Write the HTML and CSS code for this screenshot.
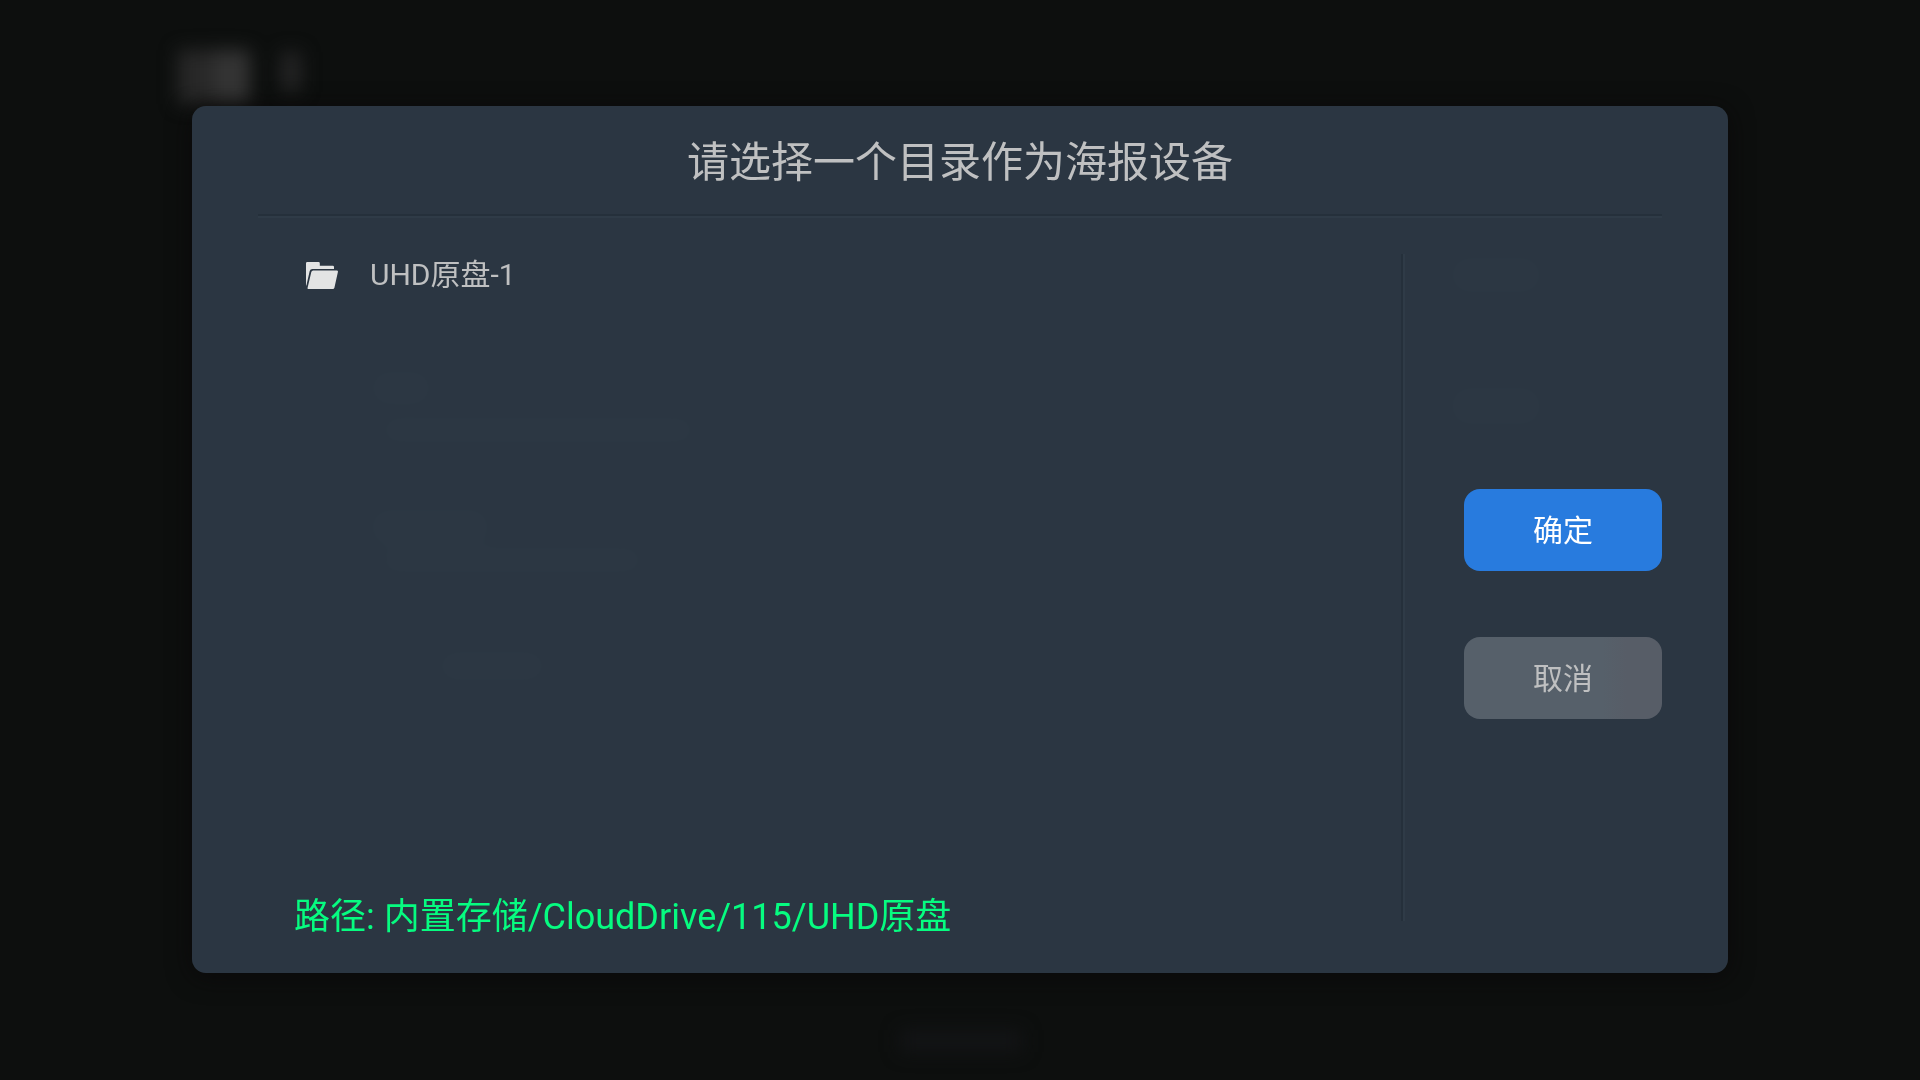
FILE: index.html
```html
<!DOCTYPE html>
<html lang="zh-CN">
<head>
<meta charset="utf-8">
<meta name="viewport" content="width=device-width, initial-scale=1">
<title>请选择一个目录作为海报设备</title>
<link rel="stylesheet" href="styles.css">
</head>
<body class="page">
<!-- Dimmed, out-of-focus screen behind the dialog -->
<svg class="backdrop" viewBox="0 0 1920 1080" preserveAspectRatio="none" aria-hidden="true">
  <defs>
    <filter id="soft" x="-50%" y="-50%" width="200%" height="200%" color-interpolation-filters="sRGB"><feGaussianBlur stdDeviation="9"/></filter>
  </defs>
  <g filter="url(#soft)">
    <rect x="178" y="50" width="40" height="54" fill="#282828"/>
    <rect x="214" y="50" width="36" height="54" fill="#343434"/>
    <rect x="281" y="52" width="20" height="40" fill="#242425"/>
    <rect x="900" y="1030" width="122" height="22" fill="#131416"/>
    <rect x="376" y="376" width="50" height="24" fill="#3a3a3a"/>
    <rect x="386" y="422" width="304" height="16" fill="#3a3a3a"/>
    <rect x="376" y="514" width="108" height="26" fill="#3a3a3a"/>
    <rect x="386" y="552" width="252" height="16" fill="#3a3a3a"/>
    <rect x="444" y="656" width="96" height="20" fill="#3a3a3a"/>
    <rect x="1456" y="262" width="80" height="26" fill="#3a3a3a"/>
    <rect x="1456" y="392" width="80" height="28" fill="#3a3a3a"/>
  </g>
</svg>
<main class="dialog" role="dialog" aria-labelledby="dialog-title">
  <h1 class="title" id="dialog-title">请选择一个目录作为海报设备</h1>
  <div class="rule"></div>
  <div class="content">
    <section class="browser">
      <ul class="folders">
        <li>
          <button class="folder" type="button">
            <svg class="folder-icon" viewBox="0 0 32 27" aria-hidden="true">
              <path d="M0 1.2Q0 0 1.2 0H12.6Q13.8 0 13.8 1.2V3.7H26.8Q28 3.7 28 4.9V7H6.4Q4.2 7 3.7 9L.4 23.5H0Z"/>
              <path d="M7.2 8.6H30.8Q32.3 8.6 31.9 10.1L28.4 25.7Q28.1 27 26.8 27H2.6Q1.3 27 1.6 25.7L5.3 10.1Q5.7 8.6 7.2 8.6Z"/>
            </svg>
            <span>UHD原盘-1</span>
          </button>
        </li>
      </ul>
      <p class="path">路径: 内置存储/CloudDrive/115/UHD原盘</p>
    </section>
    <div class="divider"></div>
    <div class="actions">
      <button class="button button-primary" type="button">确定</button>
      <button class="button button-secondary" type="button">取消</button>
    </div>
  </div>
</main>
</body>
</html>
```
FILE: styles.css
```css
* {
  box-sizing: border-box;
}

.page {
  margin: 0;
  min-height: 100vh;
  padding: 106px 10% 107px;
  display: flex;
  background: #0d0f0e;
  color: #bfc0c1;
  font-family: Roboto, "Noto Sans CJK SC", sans-serif;
}

.backdrop {
  position: fixed;
  inset: 0;
  width: 100%;
  height: 100%;
}

.dialog {
  position: relative;
  flex: 1;
  display: flex;
  flex-direction: column;
  padding: 0 66px;
  border-radius: 14px;
  background: rgba(44, 56, 68, 0.97);
  box-shadow: 0 4px 24px rgba(10, 8, 9, 0.8);
}

.title {
  margin: 0;
  padding: 27px 0 21px;
  font-size: 42px;
  font-weight: 400;
  line-height: 60px;
  text-align: center;
}

.rule {
  height: 4px;
  background: linear-gradient(#25303b 50%, #2f3b47 50%);
}

.content {
  flex: 1;
  display: grid;
  grid-template-columns: 1fr 4px 257px;
  padding-top: 36px;
}

.browser {
  display: flex;
  flex-direction: column;
  padding-left: 36px;
}

.folders {
  flex: 1;
  margin: 0;
  padding: 0;
  list-style: none;
}

.folder {
  display: flex;
  align-items: center;
  gap: 32px;
  width: 100%;
  padding: 0 12px;
  border: 0;
  background: none;
  color: inherit;
  font: inherit;
  font-size: 30px;
  line-height: 42px;
  text-align: left;
}

.folder-icon {
  width: 32px;
  height: 27px;
  fill: #e3e4e4;
}

.path {
  margin: 0 0 32px;
  color: #06fc80;
  font-size: 36px;
  line-height: 48px;
}

.divider {
  margin-bottom: 52px;
  background: linear-gradient(90deg, #25303b 50%, #2f3b47 50%);
}

.actions {
  display: flex;
  flex-direction: column;
  justify-content: center;
  gap: 66px;
  padding: 0 0 20px 59px;
}

.button {
  height: 82px;
  padding: 0 0 4px;
  border: 0;
  border-radius: 16px;
  font: inherit;
  font-size: 30px;
}

.button-primary {
  background: #287bde;
  color: #fff;
}

.button-secondary {
  background: linear-gradient(90deg, #56606a 70%, #575d67 82%);
  color: #bfc0c1;
}
```
